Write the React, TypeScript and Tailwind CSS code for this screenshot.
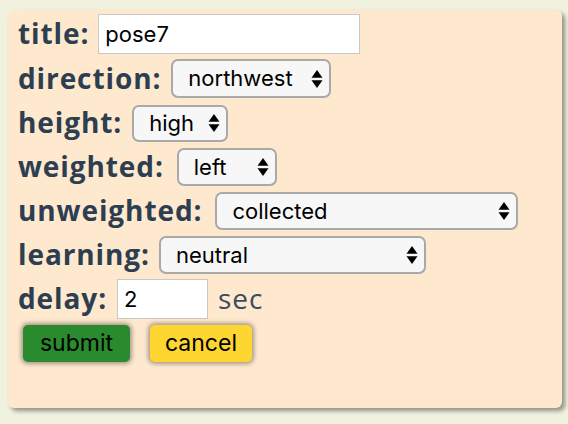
import { useState } from "react";

const label = "font-['Open_Sans',sans-serif] font-bold text-[28px] tracking-[0.9px] text-[#2c3e50] leading-none -translate-y-[1px]";
const field = "font-['Inter',Arial,sans-serif] text-[22px] text-black";

function Arrows() {
  return (
    <svg width="12" height="20" viewBox="0 0 12 20" className="pointer-events-none absolute right-[8px] top-1/2 -translate-y-1/2">
      <path d="M6 1 L11.5 8.7 L0.5 8.7 Z" fill="#000" />
      <path d="M6 19 L11.5 11.3 L0.5 11.3 Z" fill="#000" />
    </svg>
  );
}

function Select({ value, options, width, height = 39 }: { value: string; options: string[]; width: number; height?: number }) {
  const [v, setV] = useState(value);
  return (
    <div className="relative inline-block" style={{ width, height }}>
      <select
        value={v}
        onChange={(e) => setV(e.target.value)}
        className={`appearance-none w-full h-full rounded-[7px] border-2 border-[#a9a9a9] bg-[#f7f7f7] pl-[15px] pr-6 outline-none ${field}`}
      >
        {options.map((o) => (
          <option key={o}>{o}</option>
        ))}
      </select>
      <Arrows />
    </div>
  );
}

export default function App() {
  const [title, setTitle] = useState("pose7");
  const [delay, setDelay] = useState("2");

  return (
    <div className="min-h-screen bg-[#f1f1df] pt-[10px] pl-[8px]">
      <div className="w-[554px] h-[398px] bg-[#fee9cf] rounded-[6px] shadow-[3px_3px_4px_rgba(0,0,0,0.4)] pl-[10px] pt-[2px]">
        <div className="flex items-center h-[44px] gap-[9px]">
          <span className={label}>title:</span>
          <input
            value={title}
            onChange={(e) => setTitle(e.target.value)}
            className={`w-[262px] h-[40px] bg-white border border-[#c8c8c8] px-[6px] outline-none ${field}`}
          />
        </div>
        <div className="flex items-center h-[45px] gap-[10px]">
          <span className={label}>direction:</span>
          <Select value="northwest" options={["north", "northeast", "east", "southeast", "south", "southwest", "west", "northwest"]} width={160} />
        </div>
        <div className="flex items-center h-[44px] gap-[10px]">
          <span className={label}>height:</span>
          <Select value="high" options={["low", "mid", "high"]} width={96} height={37} />
        </div>
        <div className="flex items-center h-[44px] gap-[13px]">
          <span className={label}>weighted:</span>
          <Select value="left" options={["left", "right", "both"]} width={100} height={38} />
        </div>
        <div className="flex items-center h-[44px] gap-[13px]">
          <span className={label}>unweighted:</span>
          <Select value="collected" options={["collected", "extended", "lifted"]} width={303} height={38} />
        </div>
        <div className="flex items-center h-[44px] gap-[9px]">
          <span className={label}>learning:</span>
          <Select value="neutral" options={["neutral", "forward", "back"]} width={267} height={38} />
        </div>
        <div className="flex items-center h-[44px] gap-[10px]">
          <span className={label}>delay:</span>
          <input
            value={delay}
            onChange={(e) => setDelay(e.target.value)}
            className={`w-[91px] h-[40px] bg-white border border-[#c8c8c8] px-[6px] outline-none ${field}`}
          />
          <span className="font-['Open_Sans',sans-serif] text-[28px] tracking-[0.9px] text-[#3b4d5f] leading-none -translate-y-[1px]">sec</span>
        </div>
        <div className="flex items-center h-[44px] gap-[20px] pl-[5px]">
          <button className={`w-[107px] h-[37px] rounded-[5px] bg-[#2a8a2e] shadow-[0_0_4px_2px_rgba(0,0,0,0.35)] font-['Inter',Arial,sans-serif] text-[23px] text-black`}>
            submit
          </button>
          <button className={`w-[102px] h-[37px] rounded-[5px] bg-[#fdd631] shadow-[0_0_4px_2px_rgba(0,0,0,0.35)] font-['Inter',Arial,sans-serif] text-[23px] text-black`}>
            cancel
          </button>
        </div>
      </div>
    </div>
  );
}
